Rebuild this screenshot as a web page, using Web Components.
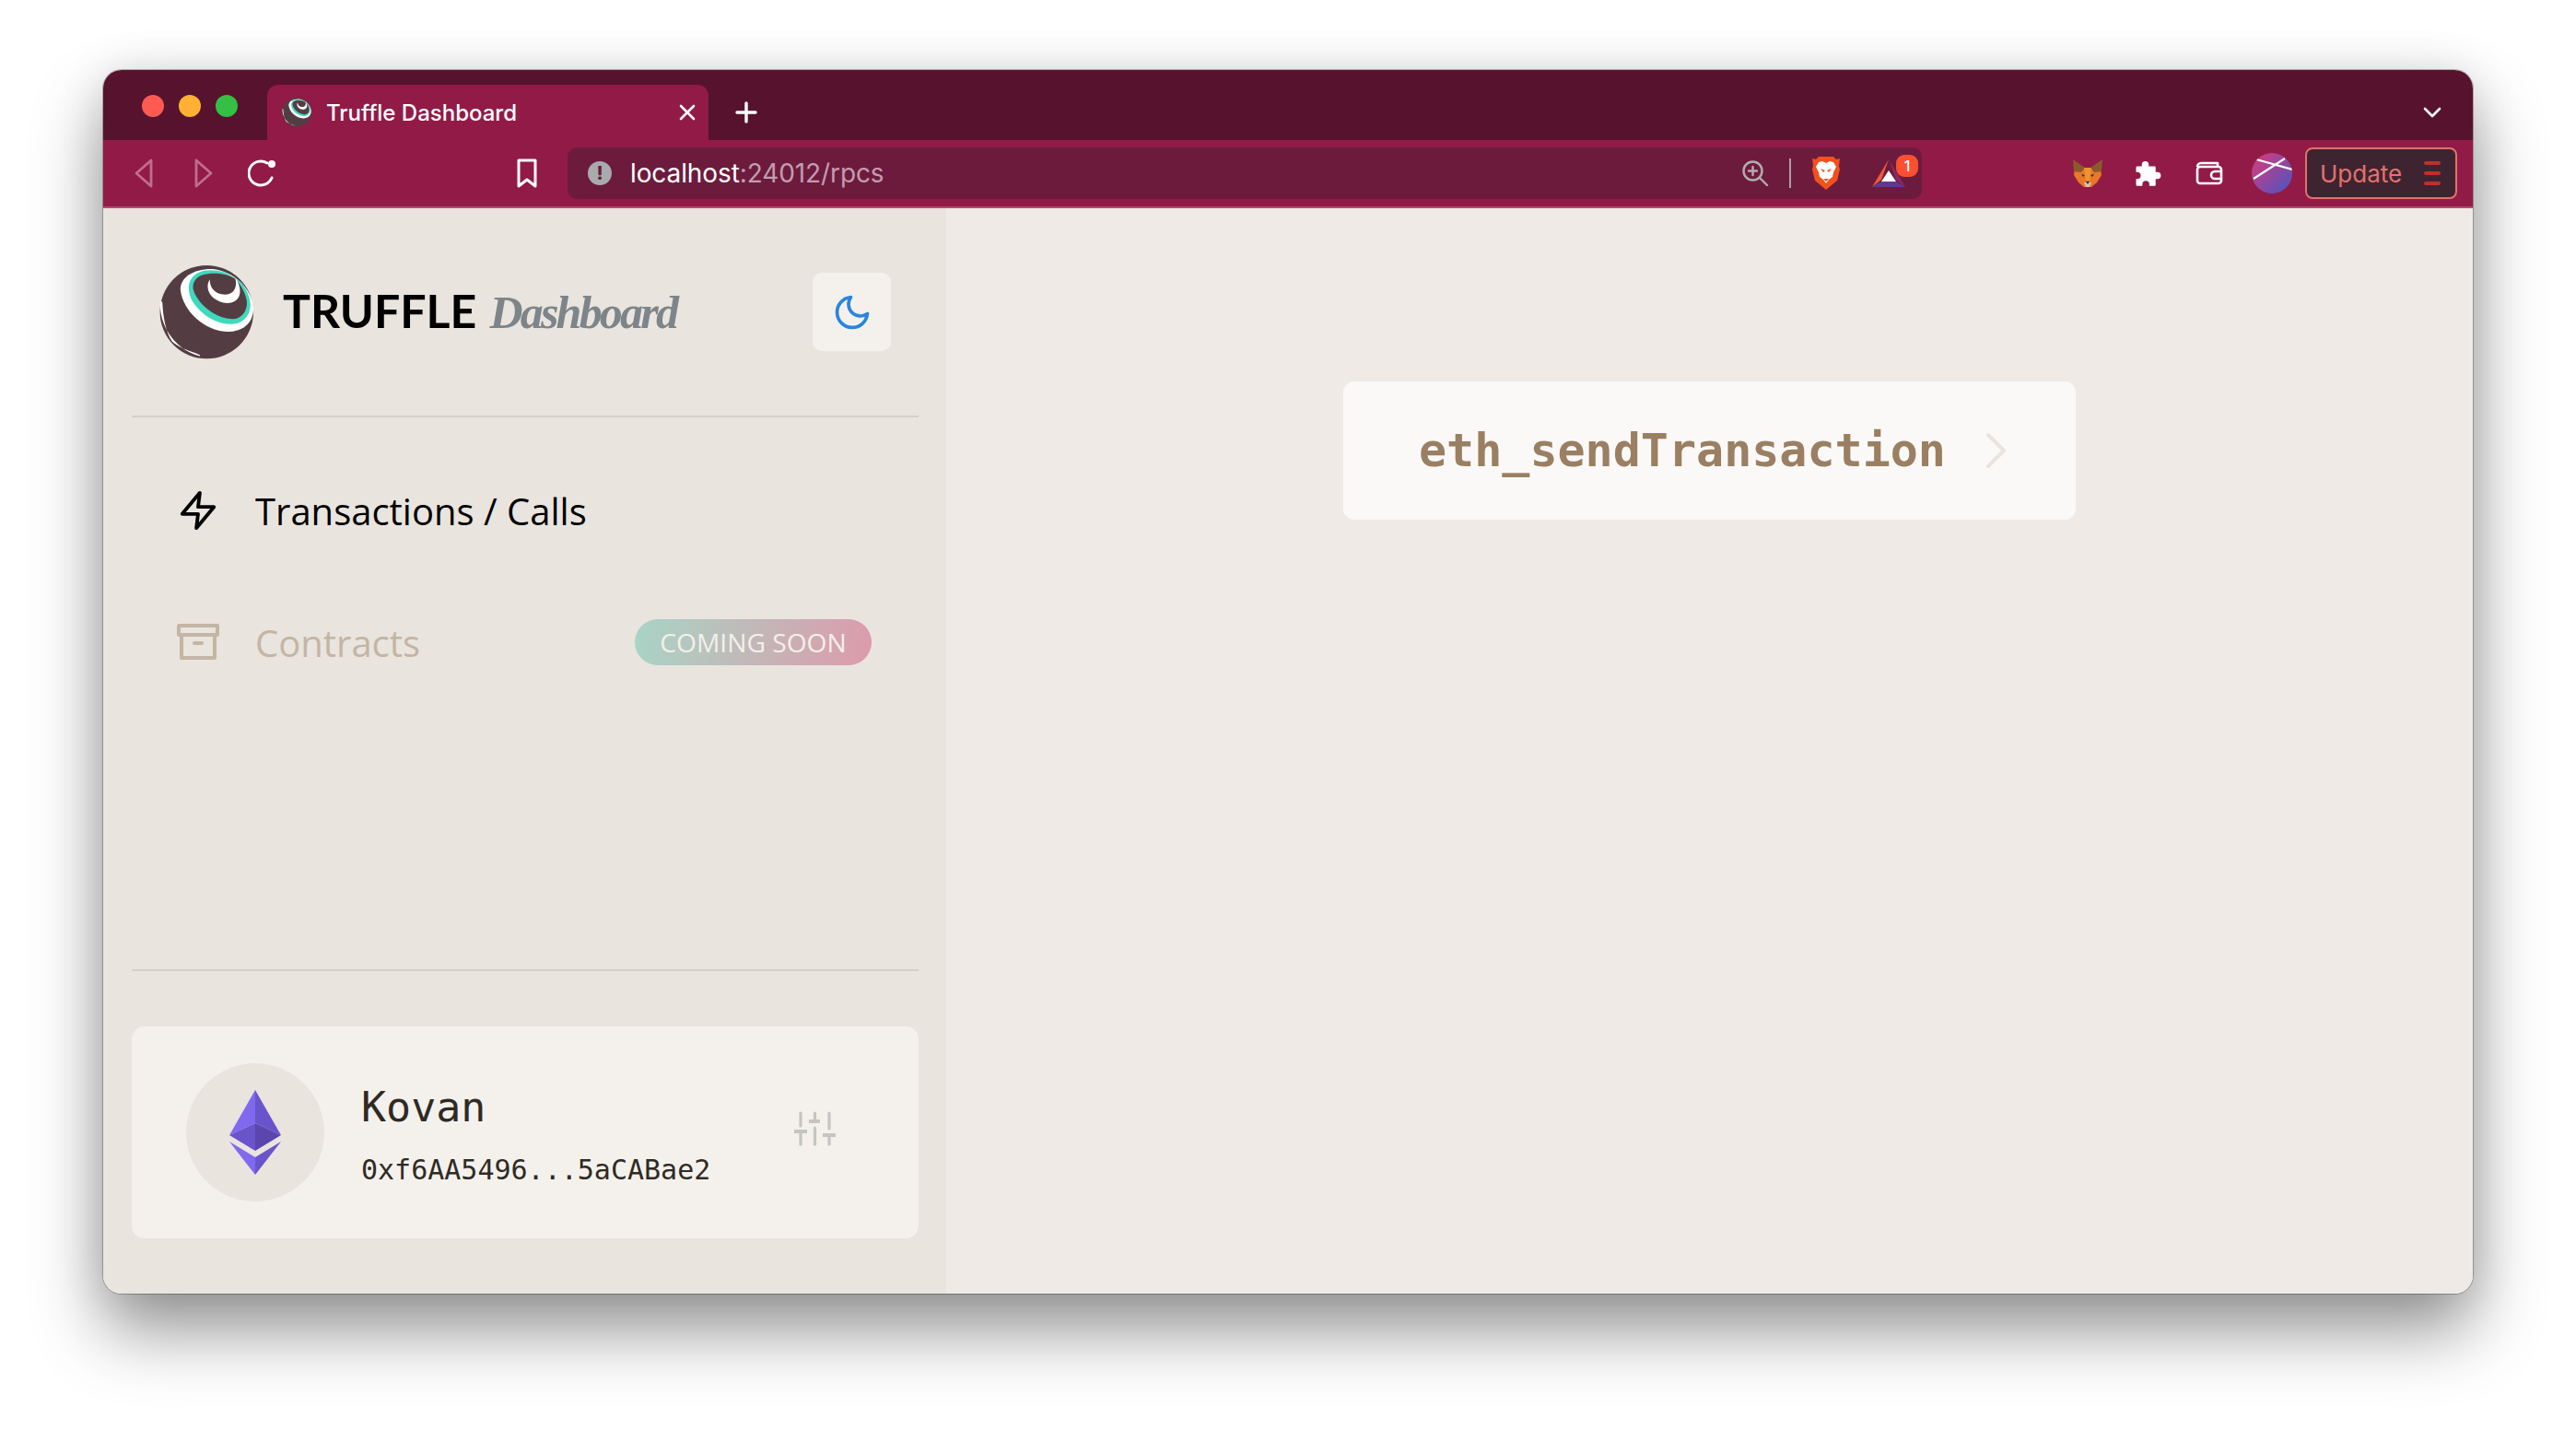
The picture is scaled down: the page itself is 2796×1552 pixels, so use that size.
<!DOCTYPE html>
<html lang="en">
<head>
<meta charset="utf-8">
<title>Truffle Dashboard</title>
<style>
  html, body { margin: 0; height: 100%; background: #fff; }
  body { box-sizing: border-box; padding: 76px 112px 148px; overflow: hidden; }
</style>
</head>
<body>
<browser-window>
  <browser-tabstrip slot="top"></browser-tabstrip>
  <browser-toolbar slot="top"></browser-toolbar>
  <dash-sidebar>
    <nav-item label="Transactions / Calls" icon="zap"></nav-item>
    <nav-item label="Contracts" icon="archive" soon></nav-item>
  </dash-sidebar>
  <dash-main>
    <rpc-card>eth_sendTransaction</rpc-card>
  </dash-main>
</browser-window>

<script>
const ICONS = {
  zap: `<svg width="46" height="46" viewBox="0 0 24 24" fill="none" stroke="#000" stroke-width="2" stroke-linecap="round" stroke-linejoin="round"><polygon points="13 2 3 14 12 14 11 22 21 10 12 10 13 2"/></svg>`,
  archive: `<svg width="46" height="46" viewBox="0 0 46 46" fill="none" stroke="#c4b5a4" stroke-width="4" stroke-linejoin="round" stroke-linecap="round"><rect x="2" y="5" width="42" height="10"/><path d="M5 15v25h36V15"/><path d="M19 24h8"/></svg>`,
  moon: `<svg width="44" height="44" viewBox="0 0 24 24" fill="none" stroke="#2a85e0" stroke-width="2" stroke-linecap="round" stroke-linejoin="round"><path d="M21 12.79A9 9 0 1 1 11.21 3 7 7 0 0 0 21 12.79z"/></svg>`,
  sliders: `<svg width="46" height="38" viewBox="0 0 46 38" fill="none" stroke="#c4c4c2" stroke-width="3.2" stroke-linecap="round"><path d="M7 2v14M22.500 2v9M38 2v17M7 24v12M22.500 18v18M38 28v8"/><path stroke-width="4" stroke-linecap="butt" d="M0 22h14M16 11h12M31 26h14"/></svg>`,
  lion: `<svg width="30" height="36" viewBox="0 0 30 36">
    <path d="M7 0h16l3 3 4-1-1 8 1 4-3 12-12 10L3 26 0 14l1-4-1-8 4 1z" fill="#f1501f"/>
    <path d="M7 6l4-1 4 2 4-2 4 1 3 5-3 6-1 5-4 3-3 4-3-4-4-3-1-5-3-6z" fill="#fff"/>
    <path d="M9 13l5 2-2 2zM21 13l-5 2 2 2zM12 24h6l-3 3z" fill="#f1501f"/>
  </svg>`,
  bat: `<svg width="36" height="30" viewBox="0 0 36 30">
    <polygon points="18,0 0,30 10,22" fill="#f15a3a"/>
    <polygon points="18,0 36,30 26,22" fill="#8a2a63"/>
    <polygon points="18,12 10,24 26,24" fill="#fff"/>
    <polygon points="0,30 10,24 26,24 36,30" fill="#5c3a94"/>
  </svg>`,
  fox: `<svg width="32" height="30" viewBox="0 0 32 30">
    <polygon points="2,10 30,10 31,17 26,25 20,30 12,30 6,25 1,17" fill="#e8782a"/>
    <polygon points="0,0 13,9 9,14 1,13" fill="#8a5a2b"/>
    <polygon points="32,0 19,9 23,14 31,13" fill="#8a5a2b"/>
    <polygon points="12,9 20,9 18,23 14,23" fill="#f0932f"/>
    <polygon points="9,16 13,17 11,19" fill="#233447"/>
    <polygon points="23,16 19,17 21,19" fill="#233447"/>
    <polygon points="12,25 20,25 18,30 14,30" fill="#d7c1b3"/>
    <polygon points="14,24 18,24 16,27" fill="#233447"/>
  </svg>`,
  puzzle: `<svg width="30" height="30" viewBox="0 0 24 24" fill="#fff"><path d="M10 1.500a3 3 0 0 1 3 3V6h5a1 1 0 0 1 1 1v4h1.500a3 3 0 0 1 0 6H19v5a1 1 0 0 1-1 1h-4.500v-1.500a3 3 0 0 0-6 0V23H3a1 1 0 0 1-1-1v-5h1a3 3 0 0 0 0-6H2V7a1 1 0 0 1 1-1h4V4.500a3 3 0 0 1 3-3z"/></svg>`
};

// truffle ball, coordinates come from a 3x crop of the logo
const truffleSvg = (size) => `<svg width="${size}" height="${size}" viewBox="35 45 318 318">
  <circle cx="195" cy="203" r="155" fill="#543d42"/>
  <path d="M41 165C35 235 80 325 172 349C175 345 170 345 160 340C125 328 95 315 80 300C60 270 50 220 48 170Z" fill="#fff"/>
  <path d="M215 60C150 58 105 90 108 130C116 200 190 270 270 268C330 265 352 225 350 185C345 130 290 68 215 60Z" fill="#fff"/>
  <path d="M290 92C255 62 190 55 158 78C130 98 130 135 148 168C180 218 235 245 280 243C320 240 342 210 340 175C338 150 325 125 310 105Z" fill="#3fd9bd"/>
  <path d="M200 76C165 78 147 100 150 125C160 170 220 226 285 226C318 222 331 192 328 165C322 135 305 108 288 92C262 76 230 73 200 76Z" fill="#543d42"/>
  <path d="M205 95C188 125 205 160 250 172C285 178 310 160 305 125C302 110 298 100 290 90C296 115 290 145 255 145C225 145 205 125 205 95Z" fill="#fff"/>
</svg>`;

class BrowserWindow extends HTMLElement {
  constructor() {
    super();
    this.attachShadow({ mode: "open" }).innerHTML = `
      <style>
        :host {
          display: flex; flex-direction: column;
          height: 100%;
          border-radius: 20px;
          box-shadow: 0 0 0 1px rgba(0,0,0,.25), 0 40px 76px rgba(0,0,0,.42), 0 0 50px rgba(0,0,0,.1);
        }
        .clip { display: flex; flex-direction: column; flex: 1; min-height: 0; border-radius: 20px; overflow: hidden; }
        .content { display: flex; flex: 1; min-height: 0; }
      </style>
      <div class="clip">
        <slot name="top"></slot>
        <div class="content"><slot></slot></div>
      </div>`;
  }
}

class BrowserTabstrip extends HTMLElement {
  constructor() {
    super();
    this.attachShadow({ mode: "open" }).innerHTML = `
      <style>
        :host { display: flex; align-items: flex-end; height: 76px; background: #57132e; font-family: Inter, sans-serif; color: #fff; }
        .lights { display: flex; gap: 16px; padding: 0 32px 0 42px; align-self: flex-start; margin-top: 27px; }
        .lights i { width: 24px; height: 24px; border-radius: 50%; }
        .tab { display: flex; align-items: center; width: 479px; height: 60px; box-sizing: border-box; padding: 0 14px 0 16px; background: #911b46; border-radius: 12px 12px 0 0; font-size: 24px; font-weight: 500; }
        .tab span { flex: 1; margin-left: 16px; }
        .tab svg { flex: none; }
        .plus { margin-left: 29px; align-self: center; margin-top: 16px; display: flex; }
        .chev { margin-left: auto; margin-right: 34px; align-self: center; margin-top: 16px; display: flex; }
      </style>
      <div class="lights">
        <i style="background:#ff5a52"></i><i style="background:#ffb134"></i><i style="background:#35bf45"></i>
      </div>
      <div class="tab">
        ${truffleSvg(32)}
        <span>Truffle Dashboard</span>
        <svg width="18" height="18" viewBox="0 0 18 18" stroke="#fff" stroke-width="2.6" stroke-linecap="round"><path d="M2 2l14 14M16 2L2 16"/></svg>
      </div>
      <div class="plus"><svg width="24" height="24" viewBox="0 0 24 24" stroke="#fff" stroke-width="3.4" stroke-linecap="round"><path d="M12 2v20M2 12h20"/></svg></div>
      <div class="chev"><svg width="20" height="12" viewBox="0 0 20 12" fill="none" stroke="#fff" stroke-width="2.6" stroke-linecap="round" stroke-linejoin="round"><path d="M2 2l8 8 8-8"/></svg></div>`;
  }
}

class BrowserToolbar extends HTMLElement {
  constructor() {
    super();
    this.attachShadow({ mode: "open" }).innerHTML = `
      <style>
        :host { display: flex; align-items: center; height: 74px; box-sizing: border-box; border-bottom: 2px solid #b5486d; background: #911b46; font-family: Inter, sans-serif; color: #fff; padding-left: 32px; }
        svg { flex: none; display: block; }
        .url { display: flex; align-items: center; width: 1470px; height: 56px; margin-left: 32px; padding-left: 22px; box-sizing: border-box; background: #6d1b3c; border-radius: 10px; font-size: 28px; }
        .warn { width: 26px; height: 26px; border-radius: 50%; background: #a7abae; color: #6d1b3c; font-size: 20px; font-weight: 800; display: flex; align-items: center; justify-content: center; flex: none; }
        .addr { margin-left: 20px; flex: 1; letter-spacing: -.1px; }
        .addr em { font-style: normal; color: #c39cb0; }
        .divider { width: 2px; height: 32px; background: #a7a2a6; margin: 0 23px 0 22px; }
        .bat { position: relative; margin: 0 18px 0 35px; width: 36px; height: 30px; }
        .badge { position: absolute; left: 26px; top: -5px; width: 24px; height: 24px; border-radius: 9px; background: #fb4f32; color: #fff; font-size: 16px; font-weight: 500; display: flex; align-items: center; justify-content: center; }
        .update { display: flex; align-items: center; width: 165px; height: 56px; box-sizing: border-box; margin: 0 17px 0 14px; padding: 0 16px 0 14px; border: 2px solid #e2726e; border-radius: 8px; background: #3e2430; color: #e2726e; font-size: 26px; }
        .update span { flex: 1; }
        .menu { display: flex; flex-direction: column; gap: 7px; }
        .menu i { width: 18px; height: 4px; border-radius: 2px; background: #c22e2e; }
      </style>
      <svg width="24" height="34" viewBox="0 0 24 34" fill="none" stroke="#c06d8d" stroke-width="2.8" stroke-linejoin="round"><path d="M20 3L4 17l16 14z"/></svg>
      <svg style="margin-left:41px" width="24" height="34" viewBox="0 0 24 34" fill="none" stroke="#c06d8d" stroke-width="2.8" stroke-linejoin="round"><path d="M4 3l16 14L4 31z"/></svg>
      <svg style="margin-left:36px" width="32" height="34" viewBox="0 0 32 34" fill="none" stroke="#fff" stroke-width="3" stroke-linecap="round"><path d="M26 22A13 13 0 1 1 21 6"/><circle cx="26" cy="7" r="4" fill="#fff" stroke="none"/></svg>
      <svg style="margin-left:259px" width="24" height="34" viewBox="0 0 24 34" fill="none" stroke="#fff" stroke-width="3" stroke-linejoin="round"><path d="M3 3h18v28l-9-7-9 7z"/></svg>
      <div class="url">
        <div class="warn">!</div>
        <div class="addr">localhost<em>:24012/rpcs</em></div>
        <svg width="30" height="30" viewBox="0 0 30 30" fill="none" stroke="#b3acae" stroke-width="2.4" stroke-linecap="round"><circle cx="12.5" cy="12.5" r="10"/><path d="M20 20l8 8M12.5 8v9M8 12.5h9"/></svg>
        <div class="divider"></div>
        ${ICONS.lion}
        <div class="bat">
          ${ICONS.bat}
          <div class="badge">1</div>
        </div>
      </div>
      <div style="margin-left:auto">${ICONS.fox}</div>
      <div style="margin-left:34px">${ICONS.puzzle}</div>
      <svg style="margin-left:37px" width="30" height="26" viewBox="0 0 30 26" fill="none" stroke="#fff" stroke-width="2.6" stroke-linejoin="round"><path d="M2 6a4 4 0 0 1 4-4h18v4"/><rect x="2" y="6" width="26" height="18" rx="3"/><path d="M28 11h-7a4 4 0 0 0 0 8h7"/></svg>
      <svg style="margin-left:31px" width="44" height="44" viewBox="0 0 44 44">
        <defs>
          <linearGradient id="av" x1="0" y1="0" x2="1" y2="1"><stop offset="0" stop-color="#df3a78"/><stop offset="1" stop-color="#4655c6"/></linearGradient>
          <clipPath id="avc"><circle cx="22" cy="22" r="22"/></clipPath>
        </defs>
        <circle cx="22" cy="22" r="22" fill="url(#av)"/>
        <path d="M5 7l39 11M2 28L36 6" stroke="#fff" stroke-width="2.2" clip-path="url(#avc)"/>
      </svg>
      <div class="update"><span>Update</span><div class="menu"><i></i><i></i><i></i></div></div>`;
  }
}

class DashSidebar extends HTMLElement {
  constructor() {
    super();
    this.attachShadow({ mode: "open" }).innerHTML = `
      <style>
        :host { display: flex; flex-direction: column; width: 915px; flex: none; box-sizing: border-box; padding: 0 30px 60px 31px; background: #e9e4de; }
        .head { display: flex; align-items: center; height: 225px; flex: none; padding: 0 30px 0 29px; border-bottom: 2px solid #d5d0c9; }
        .head svg { flex: none; }
        .brand { font-family: Lato, sans-serif; font-size: 50px; font-weight: 700; color: #000; margin-left: 31px; white-space: nowrap; margin-bottom: 2px; }
        .brand em { font-family: "Liberation Serif", serif; font-size: 50px; font-weight: 700; font-style: italic; color: #7d858a; letter-spacing: -2.8px; margin-left: 2px; }
        .moon { margin-left: auto; width: 85px; height: 85px; flex: none; border-radius: 10px; background: #f4f1ec; display: flex; align-items: center; justify-content: center; }
        nav { flex: 1; display: flex; flex-direction: column; gap: 63px; padding-top: 61px; border-bottom: 2px solid #d5d0c9; }
        network-card { margin-top: 60px; }
      </style>
      <div class="head">
        ${truffleSvg(104)}
        <div class="brand">TRUFFLE <em>Dashboard</em></div>
        <div class="moon">${ICONS.moon}</div>
      </div>
      <nav><slot></slot></nav>
      <network-card name="Kovan" address="0xf6AA5496...5aCABae2"></network-card>`;
  }
}

class NavItem extends HTMLElement {
  connectedCallback() {
    const soon = this.hasAttribute("soon");
    this.attachShadow({ mode: "open" }).innerHTML = `
      <style>
        :host { display: flex; align-items: center; height: 80px; padding: 0 51px 0 49px; font-family: "Open Sans", sans-serif; font-size: 40px; color: ${soon ? "#c4b5a4" : "#000"}; }
        svg { display: block; flex: none; }
        .label { margin-left: 39px; flex: 1; }
        .soon { display: flex; align-items: center; justify-content: center; width: 257px; height: 50px; border-radius: 25px; background: linear-gradient(100deg, #a8d5c6, #dd9aab); color: #f3efe9; font-size: 28.2px; }
      </style>
      ${ICONS[this.getAttribute("icon")]}
      <span class="label">${this.getAttribute("label")}</span>
      ${soon ? '<span class="soon">COMING SOON</span>' : ""}`;
  }
}

class NetworkCard extends HTMLElement {
  connectedCallback() {
    this.attachShadow({ mode: "open" }).innerHTML = `
      <style>
        :host { display: flex; align-items: center; height: 230px; flex: none; padding: 0 89px 0 59px; border-radius: 14px; background: #f4f1ec; font-family: "DejaVu Sans Mono", monospace; color: #2f2a24; }
        .coin { width: 150px; height: 150px; flex: none; border-radius: 50%; background: #e9e4de; display: flex; align-items: center; justify-content: center; }
        .info { flex: 1; margin-left: 40px; display: flex; flex-direction: column; gap: 23px; padding-top: 7px; }
        .name { font-size: 45px; line-height: 52px; }
        .addr { font-size: 30px; line-height: 38px; }
        svg { display: block; flex: none; }
        .tune { margin-bottom: 8px; }
      </style>
      <div class="coin">
        <svg width="56" height="92" viewBox="0 0 56 92">
          <polygon points="28,0 0,49 28,36" fill="#8069ef"/>
          <polygon points="28,0 56,49 28,36" fill="#6a54cc"/>
          <polygon points="0,49 28,36 28,66" fill="#6a54cc"/>
          <polygon points="56,49 28,36 28,66" fill="#5a46ad"/>
          <polygon points="0,56 28,73 28,92" fill="#8069ef"/>
          <polygon points="56,56 28,73 28,92" fill="#6a54cc"/>
        </svg>
      </div>
      <div class="info">
        <div class="name">${this.getAttribute("name")}</div>
        <div class="addr">${this.getAttribute("address")}</div>
      </div>
      <div class="tune">${ICONS.sliders}</div>`;
  }
}

class DashMain extends HTMLElement {
  constructor() {
    super();
    this.attachShadow({ mode: "open" }).innerHTML = `
      <style>
        :host { display: flex; flex-direction: column; align-items: center; flex: 1; padding-top: 188px; background: #efeae6; }
      </style>
      <slot></slot>`;
  }
}

class RpcCard extends HTMLElement {
  constructor() {
    super();
    this.attachShadow({ mode: "open" }).innerHTML = `
      <style>
        :host { display: flex; align-items: center; width: 795px; height: 150px; box-sizing: border-box; padding-left: 82px; border-radius: 12px; background: #fbf9f7; font-family: "DejaVu Sans Mono", monospace; font-size: 50px; font-weight: 700; color: #9a7f62; }
        svg { margin-left: 43px; display: block; }
      </style>
      <slot></slot>
      <svg width="24" height="38" viewBox="0 0 24 38" fill="none" stroke="#e9e4de" stroke-width="4" stroke-linecap="round" stroke-linejoin="round"><path d="M3 2l17 17L3 36"/></svg>`;
  }
}

customElements.define("browser-window", BrowserWindow);
customElements.define("browser-tabstrip", BrowserTabstrip);
customElements.define("browser-toolbar", BrowserToolbar);
customElements.define("network-card", NetworkCard);
customElements.define("dash-sidebar", DashSidebar);
customElements.define("nav-item", NavItem);
customElements.define("dash-main", DashMain);
customElements.define("rpc-card", RpcCard);
</script>
</body>
</html>
